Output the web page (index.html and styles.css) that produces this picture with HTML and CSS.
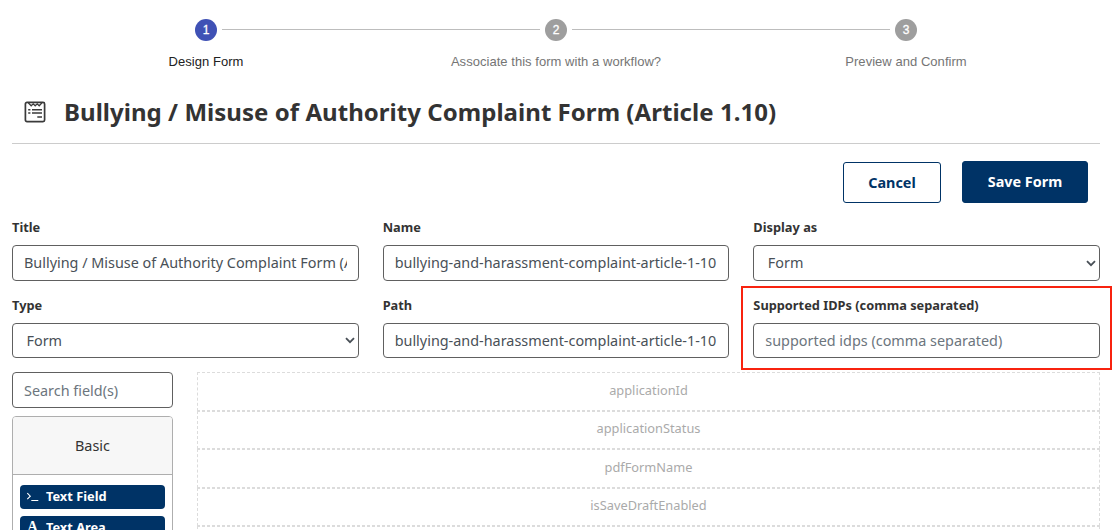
FILE: index.html
```html
<!DOCTYPE html>
<html lang="en">
<head>
<meta charset="utf-8">
<title>Design Form</title>
<link rel="stylesheet" href="styles.css">
</head>
<body>
<div class="page">
  <div class="stepper">
    <div class="step active"><div class="rail"><i class="line hidden"></i><span class="dot">1</span><i class="line"></i></div><div class="step-label">Design Form</div></div>
    <div class="step"><div class="rail"><i class="line"></i><span class="dot">2</span><i class="line"></i></div><div class="step-label">Associate this form with a workflow?</div></div>
    <div class="step"><div class="rail"><i class="line"></i><span class="dot">3</span><i class="line hidden"></i></div><div class="step-label">Preview and Confirm</div></div>
  </div>

  <header class="heading">
    <svg class="heading-icon" viewBox="0 0 22 22" width="22" height="22" fill="none" stroke="#3a3a3a">
      <rect x="1.4" y="1.4" width="19.2" height="19.2" rx="1.6" stroke-width="1.7"/>
      <path d="M4.2 1.8L7.2 4.8L9.2 2.8L11.2 4.8L13.2 2.8L15.2 4.8L18 1.8" stroke-width="1.3"/>
      <path d="M4.2 8.8h2.2M8 8.8h10M4.2 12h2.2M8 12h10M13.3 16h4.7" stroke-width="1.6"/>
    </svg>
    <h1>Bullying / Misuse of Authority Complaint Form (Article 1.10)</h1>
  </header>

  <div class="actions">
    <button class="btn btn-outline">Cancel</button>
    <button class="btn btn-primary">Save Form</button>
  </div>

  <div class="fields">
    <div class="field"><label>Title</label><div class="control"><span class="value">Bullying / Misuse of Authority Complaint Form (Article 1.10)</span></div></div>
    <div class="field"><label>Name</label><div class="control"><span class="value">bullying-and-harassment-complaint-article-1-10</span></div></div>
    <div class="field"><label>Display as</label><div class="control select"><span class="value">Form</span><svg class="chevron" viewBox="0 0 10 7" width="10" height="7"><path d="M1 1.2L5 5.2L9 1.2"/></svg></div></div>
    <div class="field"><label>Type</label><div class="control select"><span class="value">Form</span><svg class="chevron" viewBox="0 0 10 7" width="10" height="7"><path d="M1 1.2L5 5.2L9 1.2"/></svg></div></div>
    <div class="field"><label>Path</label><div class="control"><span class="value">bullying-and-harassment-complaint-article-1-10</span></div></div>
    <div class="field marked"><label>Supported IDPs (comma separated)</label><div class="control"><span class="value placeholder">supported idps (comma separated)</span></div></div>
  </div>

  <div class="builder">
    <aside class="sidebar">
      <div class="control search"><span class="value placeholder">Search field(s)</span></div>
      <div class="card">
        <div class="card-head">Basic</div>
        <div class="card-body">
          <div class="component"><svg class="component-icon" viewBox="0 0 13 12" width="13" height="12"><path d="M1.3 2.2L4.3 5.2L1.3 8.2M5.3 9.5H12.3" fill="none" stroke="#fff" stroke-width="1.1"/></svg><span>Text Field</span></div>
          <div class="component"><span class="component-icon letter">A</span><span>Text Area</span></div>
        </div>
      </div>
    </aside>
    <main class="canvas">
      <div class="drop-row">applicationId</div>
      <div class="drop-row short">applicationStatus</div>
      <div class="drop-row">pdfFormName</div>
      <div class="drop-row short">isSaveDraftEnabled</div>
      <div class="drop-row"></div>
    </main>
  </div>
</div>
</body>
</html>
```
FILE: styles.css
```css
*, *::after { box-sizing: border-box; }
body {
  margin: 0;
  background: #fff;
  color: #333;
  font-family: "Noto Sans", sans-serif;
}
.page { height: 530px; overflow: hidden; padding: 19px 14px 0 12px; }

.stepper { display: flex; width: 1050px; margin-left: 19px; font-family: "Liberation Sans", sans-serif; }
.step { width: 350px; color: #757575; }
.rail { display: flex; align-items: flex-start; gap: 5px; height: 22px; }
.line { flex: 1; height: 1px; margin-top: 10px; background: #bdbdbd; }
.line.hidden { visibility: hidden; }
.dot {
  width: 22px; height: 22px; border-radius: 50%;
  background: #9e9e9e; color: #fff;
  font-size: 12px; line-height: 22px; text-align: center; -webkit-text-stroke: 0.3px #fff;
}
.step-label { margin-top: 12px; font-size: 13px; line-height: 18px; letter-spacing: 0.04px; text-align: center; white-space: nowrap; }
.active .dot { background: #3f51b5; }
.active .step-label { color: #212121; }

.heading { display: flex; align-items: center; height: 73px; padding-left: 12px; border-bottom: 1px solid #ccc; }
.heading-icon { margin-top: 10px; }
h1 { margin: 9px 0 0 18px; font-size: 24px; line-height: 36px; font-weight: 700; letter-spacing: 0.04px; white-space: nowrap; }

.actions { display: flex; justify-content: flex-end; align-items: flex-end; gap: 21px; margin: 17px 12px 0 0; height: 42px; }
.btn { padding: 0; border: 1px solid #036; border-radius: 3px; font: 700 14.4px/20px "Noto Sans", sans-serif; }
.btn-outline { width: 98px; height: 41px; background: #fff; color: #036; }
.btn-primary { width: 126px; height: 42px; background: #036; color: #fff; }

.fields { display: grid; grid-template-columns: repeat(3, minmax(0, 1fr)); column-gap: 24px; margin-top: 14px; }
.field { position: relative; height: 78px; }
.field label { display: block; height: 28px; font-size: 12.8px; line-height: 21px; font-weight: 700; }
.control {
  display: flex; align-items: center; height: 36px; padding: 0 11px;
  border: 1px solid #606060; border-radius: 4px;
  font-size: 14.4px; line-height: 20px; color: #495057; background: #fff;
}
.field:nth-child(n+4) .control { height: 35px; }
.value { flex: 1; overflow: hidden; white-space: nowrap; }
.placeholder { color: #6c757d; }
.select { padding: 0 3px 0 13.5px; }
.chevron { fill: none; stroke: #495057; stroke-width: 1.8; }
.marked::after { content: ""; position: absolute; left: -12px; top: -9px; right: -12px; height: 84px; border: 2px solid #f8230f; z-index: 1; }

.builder { display: grid; grid-template-columns: 161px minmax(0, 1fr); column-gap: 24px; margin-top: -1px; }
.search { padding-top: 1px; }
.card { height: 160px; margin-top: 8px; border: 1px solid #aeaeae; border-radius: 4px; overflow: hidden; }
.card-head { height: 58px; border-bottom: 1px solid #aeaeae; background: #f7f7f7; font-size: 14.4px; line-height: 57px; text-align: center; }
.card-body { display: grid; gap: 7px; padding: 10px 7px; }
.component { display: flex; align-items: flex-start; gap: 7px; height: 24px; padding-left: 6px; border-radius: 4px; background: #036; color: #fff; font-size: 12.8px; line-height: 22px; font-weight: 700; }
.component-icon { flex: none; width: 13px; }
svg.component-icon { margin-top: 6px; }
.letter { font-family: "Liberation Serif", serif; font-size: 14px; text-align: center; }
.drop-row { height: 39px; border: 1px dashed #dcdcdc; color: #aaa; font-size: 12.8px; line-height: 34px; text-align: center; }
.drop-row.short { height: 38px; line-height: 32px; }
```
